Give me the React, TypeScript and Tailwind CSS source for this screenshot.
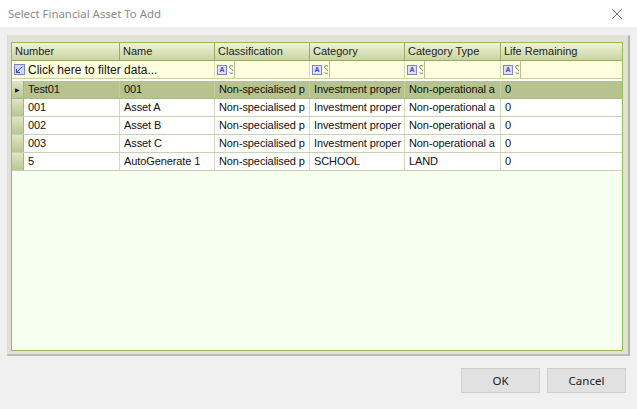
import React from "react"

const cols = [
  { label: "Number", w: "w-[108px]" },
  { label: "Name", w: "w-[95px]" },
  { label: "Classification", w: "w-[95px]" },
  { label: "Category", w: "w-[95px]" },
  { label: "Category Type", w: "w-[96px]" },
  { label: "Life Remaining", w: "flex-1" },
]

const rows = [
  ["Test01", "001", "Non-specialised p", "Investment proper", "Non-operational a", "0"],
  ["001", "Asset A", "Non-specialised p", "Investment proper", "Non-operational a", "0"],
  ["002", "Asset B", "Non-specialised p", "Investment proper", "Non-operational a", "0"],
  ["003", "Asset C", "Non-specialised p", "Investment proper", "Non-operational a", "0"],
  ["5", "AutoGenerate 1", "Non-specialised p", "SCHOOL", "LAND", "0"],
]

const dataW = ["w-[96px]", "w-[95px]", "w-[95px]", "w-[95px]", "w-[96px]", "flex-1"]

function FilterIcon() {
  return (
    <span className="inline-flex h-[10px] w-[10px] items-center justify-center border border-[#7c86c8] bg-[#dfe3fb] text-[7px] leading-none font-bold text-[#3b47b0]">
      A
    </span>
  )
}

// the half-visible operator glyph the grid clips
function ClippedGlyph() {
  return (
    <svg width="4" height="9" viewBox="0 0 4 9" className="ml-[2px]">
      <path d="M4 1.2 C2.5 0 0.5 0.6 0.6 2.2 C0.7 3.8 4 4.2 4 6.2 M0.6 7.6 C1.5 8.6 3 8.6 4 8" stroke="#666" strokeWidth="0.9" fill="none" />
    </svg>
  )
}

function FilterCell({ w, last }: { w: string; last?: boolean }) {
  return (
    <div className={`${w} flex h-full items-center ${last ? "" : "border-r border-[#d7dfb0]"} pl-[2px]`}>
      <FilterIcon />
      <ClippedGlyph />
      <span className="ml-[1px] h-full border-l border-[#b8bf98]" />
    </div>
  )
}

export default function App() {
  return (
    <div
      className="flex h-[409px] w-[637px] flex-col bg-[#f0f0f0] text-[11px]"
      style={{ fontFamily: '"Liberation Sans", Arial, sans-serif' }}
    >
      <div className="flex h-[27px] items-center justify-between bg-white pl-[8px] pr-[14px]">
        <span className="text-[11.4px] text-[#8a8a8a]" style={{ fontFamily: '"Noto Sans", "Open Sans", sans-serif' }}>
          Select Financial Asset To Add
        </span>
        <svg width="12" height="12" viewBox="0 0 12 12" className="text-[#6f6f6f]">
          <path d="M1 1 L11 11 M11 1 L1 11" stroke="currentColor" strokeWidth="1" />
        </svg>
      </div>

      <div className="ml-[7px] mt-[8px] flex h-[321px] w-[623px] flex-col border-r-2 border-b-2 border-l border-t border-r-[#b4b4a8] border-b-[#bdbdb2] border-l-[#dcdcd4] border-t-[#e4e4dc] bg-[#e1e1d6] pb-[3px] pl-[3px] pr-[5px] pt-[6px]">
        <div className="flex flex-1 flex-col border border-[#8dc050] bg-[#f7fff0]">
          <div className="flex h-[18px] border-b border-[#9aab62] bg-gradient-to-b from-[#eef3d8] to-[#c9d4a0] text-[#222]">
            {cols.map((c) => (
              <div key={c.label} className={`${c.w} flex items-center border-r border-[#9aab62] pl-[3px] last:border-r-0`}>
                {c.label}
              </div>
            ))}
          </div>

          <div className="flex h-[18px] border-b border-[#c7d3a0] bg-[#ffffe0] text-[#111]">
            <div className="flex h-full w-[203px] items-center border-r border-[#d7dfb0] pl-[2px]">
              <span className="inline-flex h-[11px] w-[11px] items-center justify-center border border-[#7c86c8] bg-[#cfd6f7]">
                <svg width="7" height="7" viewBox="0 0 7 7">
                  <path d="M0.5 6.5 L6.5 0.5 M0.5 6.5 L0.5 3 M0.5 6.5 L4 6.5" stroke="#3b47b0" strokeWidth="1" fill="none" />
                </svg>
              </span>
              <span className="ml-[3px] text-[12px]">Click here to filter data...</span>
            </div>
            <FilterCell w="w-[95px]" />
            <FilterCell w="w-[95px]" />
            <FilterCell w="w-[96px]" />
            <FilterCell w="flex-1" last />
          </div>

          <div className="h-[2px] bg-white" />

          {rows.map((r, i) => {
            const sel = i === 0
            return (
              <div
                key={i}
                className={`flex h-[18px] border-b ${sel ? "border-[#aab883] bg-[#b6c38e]" : "border-[#c9d2b0] bg-white"} text-[#111]`}
              >
                <div className="flex w-[12px] items-center justify-center border-r border-[#a9b683] bg-gradient-to-b from-[#dfe6c4] to-[#b9c694]">
                  {sel && <span className="text-[6px] leading-none text-[#111]">▶</span>}
                </div>
                {r.map((v, j) => (
                  <div
                    key={j}
                    className={`${dataW[j]} flex items-center overflow-hidden whitespace-nowrap border-r ${sel ? "border-[#c2cca2]" : "border-[#d3dac0]"} pl-[4px] text-[11px] tracking-[-0.1px] last:border-r-0`}
                  >
                    {v}
                  </div>
                ))}
              </div>
            )
          })}
        </div>
      </div>

      <div className="mt-[12px] flex justify-end gap-[7px] pr-[11px]">
        {["OK", "Cancel"].map((b) => (
          <button
            key={b}
            className="h-[25px] w-[79px] border border-[#cfcfcf] bg-[#e1e1e1] text-[11.5px] text-[#222]"
            style={{ fontFamily: '"Noto Sans", "Open Sans", sans-serif' }}
          >
            {b}
          </button>
        ))}
      </div>
    </div>
  )
}
